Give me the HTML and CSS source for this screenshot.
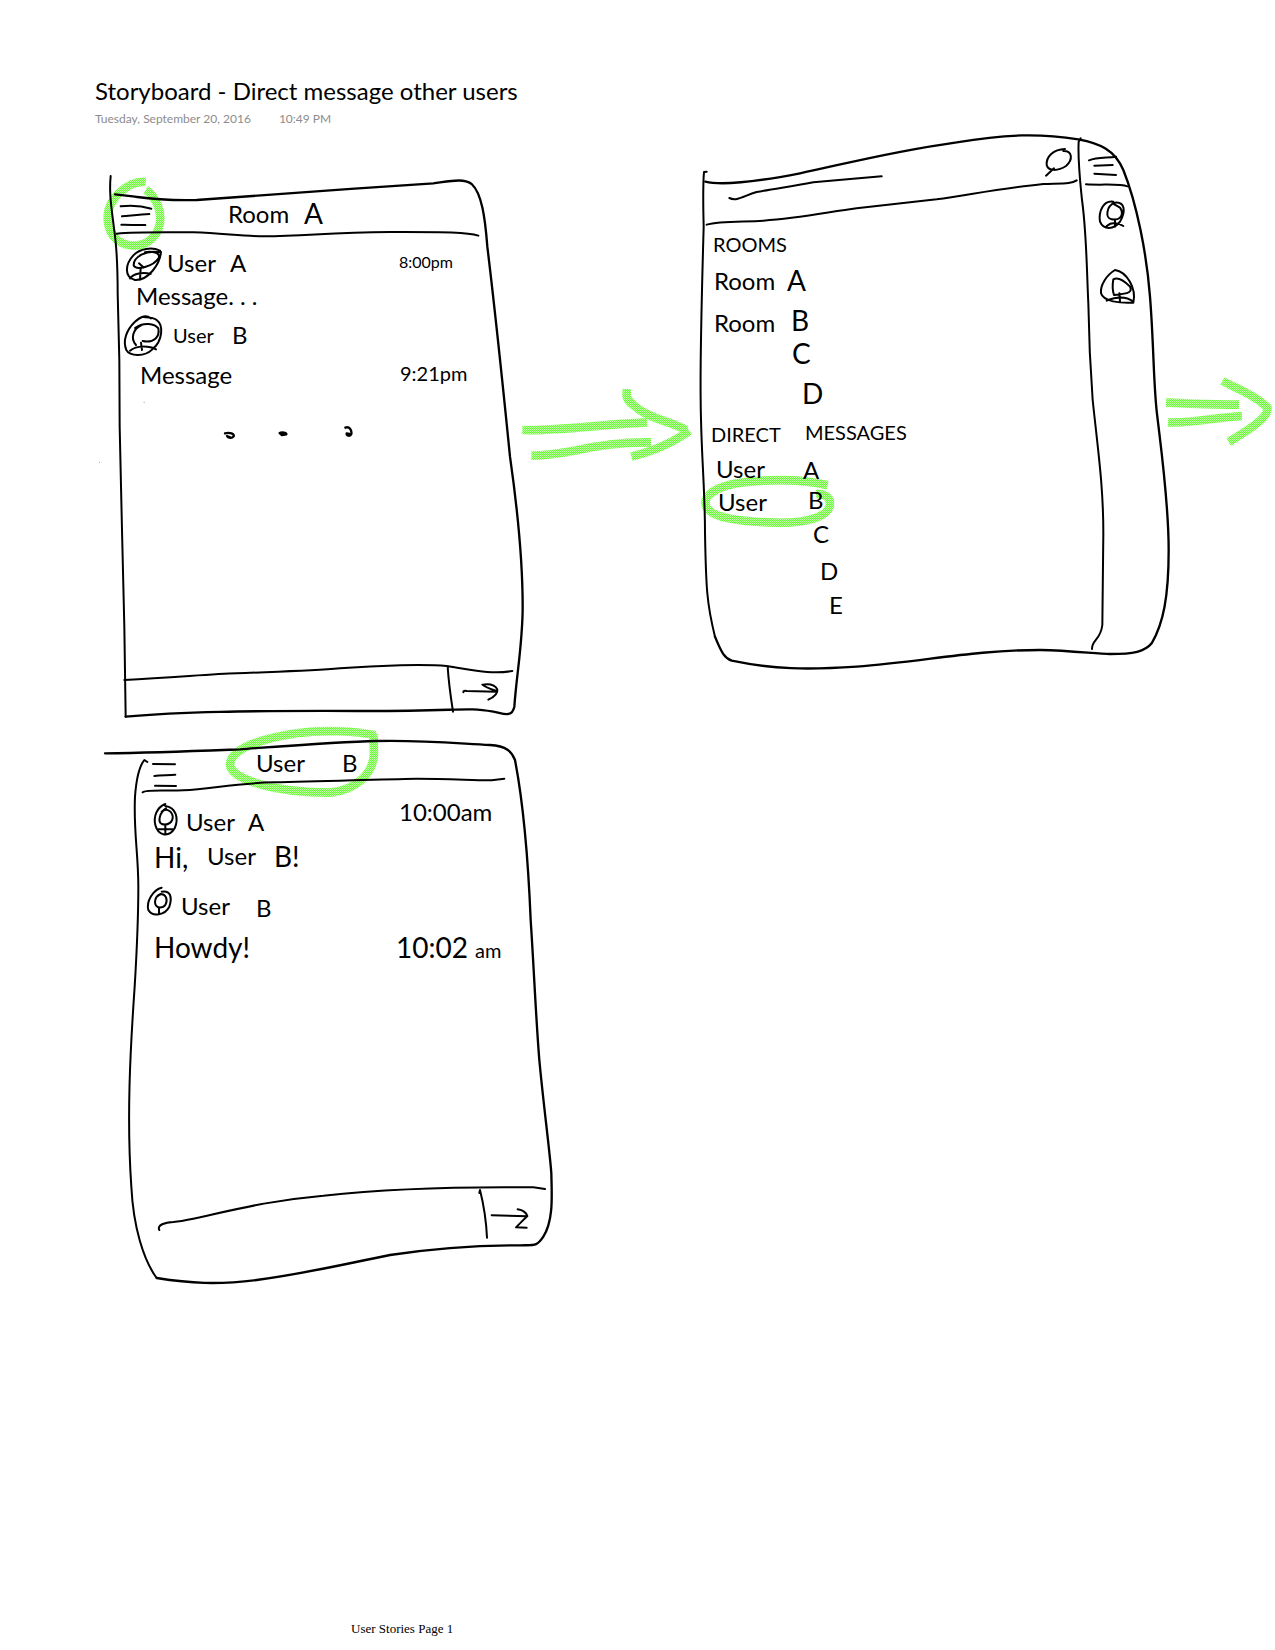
FILE: index.html
```html
<!DOCTYPE html>
<html lang="en">
<head>
<meta charset="utf-8">
<meta name="viewport" content="width=device-width, initial-scale=1">
<title>Storyboard - Direct message other users</title>
<link rel="stylesheet" href="styles.css">
</head>
<body>
<header class="note-header">
  <h1 class="note-title">Storyboard - Direct message other users</h1>
  <p class="note-meta"><time datetime="2016-09-20">Tuesday, September 20, 2016</time><time datetime="22:49">10:49 PM</time></p>
</header>
<main class="board">
  <!-- Frame 1: conversation in Room A -->
  <svg class="frame" viewBox="0 130 695 592" role="group" aria-label="Room A conversation">
    <defs>
      <pattern id="marker" width="6" height="6" patternUnits="userSpaceOnUse">
        <path class="marker-base" d="M0 0h6v6h-6z"/>
        <path class="marker-dot" d="M0 0h3v3h-3zM3 3h3v3h-3z"/>
      </pattern>
    </defs>
    <g transform="translate(80 60) scale(.33333333)">
      <path class="marker" d="M197 366C145 362 80 415 83 480C88 535 125 557 165 557C210 555 240 520 241 475C240 440 222 405 197 390"/>
      <path class="ink" d="M92 348C87 400 94 440 102 505C112 570 113 620 113 700L118 900L119 1100L126 1410L133 1700L137 1970"/>
      <path class="ink bold" d="M137 1970C300 1955 500 1952 830 1953S1150 1940 1240 1955C1270 1960 1295 1975 1303 1940C1310 1840 1328 1750 1328 1640C1328 1500 1310 1330 1290 1190C1270 990 1245 750 1222 560C1215 470 1205 400 1175 372C1150 355 1120 362 1060 370C820 385 500 410 350 420C240 422 200 415 165 410L105 403"/>
      <path class="ink" d="M110 521C170 515 260 517 340 517C430 520 480 528 550 529C680 528 740 518 930 516C1080 516 1160 515 1195 527"/>
      <path class="ink" d="M122 439C150 436 180 436 214 446M126 469C150 467 180 464 208 462M124 494C150 495 170 496 196 495"/>
      <path class="ink" d="M240 572C215 560 180 566 160 586C135 613 132 652 165 660C205 662 240 612 243 576M240 577C198 568 160 592 161 616C168 632 220 620 236 594C243 578 215 573 195 577"/>
      <path class="ink" d="M177 610L190 622M182 625L180 658M150 655C160 640 190 635 212 642"/>
      <path class="ink" d="M213 775C195 762 180 772 165 785C138 810 128 845 139 870C150 890 195 890 217 868C250 840 250 795 230 780C220 771 205 772 190 771M185 795C160 805 150 835 168 855M165 804C190 785 225 790 235 805C240 830 222 850 188 843M183 848L186 870M150 872C170 855 210 858 228 868"/>
      <path class="ink" d="M1150 1897Q1150 1891 1160 1893L1250 1895M1225 1919C1240 1912 1254 1900 1252 1888C1245 1874 1225 1871 1207 1874C1215 1882 1235 1888 1250 1893"/>
      <path class="ink" d="M133 1860C300 1851 400 1842 470 1840C620 1834 700 1832 780 1825C900 1815 1040 1812 1100 1818C1170 1828 1230 1845 1297 1833M1103 1820C1106 1870 1112 1910 1119 1955"/>
      <path class="ink bold" d="M435 1120C450 1116 464 1122 461 1129C456 1136 444 1135 441 1128L450 1132M599 1119C605 1116 620 1118 619 1123L606 1125ZM796 1103C808 1098 816 1110 814 1122C811 1130 799 1128 800 1120L808 1122"/>
      <path class="speck" d="M191 1027h3M57 1207h3"/>
    </g>
    <g transform="translate(510 360) scale(.33333333)">
      <path class="marker" d="M37 210C150 213 250 195 412 187M64 287C180 287 250 245 423 247M350 87L350 110C353 122 362 130 385 147C420 175 480 185 529 210M538 212C500 240 440 270 364 290"/>
    </g>
    <text class="hand md" x="228" y="223">Room</text>
    <text class="hand lg" x="304" y="224">A</text>
    <text class="hand md" x="167" y="272">User</text>
    <text class="hand md" x="230" y="272">A</text>
    <text class="hand xs" x="399" y="268">8:00pm</text>
    <text class="hand md" x="136" y="305">Message. . .</text>
    <text class="hand sm" x="173" y="343">User</text>
    <text class="hand md" x="232" y="344">B</text>
    <text class="hand md" x="140" y="384">Message</text>
    <text class="hand sm" x="400" y="381">9:21pm</text>
  </svg>

  <!-- Frame 2: navigation drawer with rooms and direct messages -->
  <svg class="frame" viewBox="695 130 580 592" role="group" aria-label="Rooms and direct messages drawer">
    <g transform="translate(690 120) scale(.33333333)">
      <path class="marker" d="M413 1096C330 1076 250 1078 180 1085C100 1092 47 1115 46 1150C50 1190 130 1205 260 1208C350 1210 420 1190 420 1150C420 1130 400 1120 378 1122"/>
      <path class="ink" d="M50 155L42 156C38 200 40 280 41 320C36 500 30 700 32 840C33 1000 45 1100 45 1240C48 1400 50 1450 75 1550"/>
      <path class="ink bold" d="M75 1550C95 1600 105 1615 125 1622C250 1648 350 1650 500 1640C700 1625 850 1590 1050 1590C1150 1592 1220 1602 1260 1602C1330 1602 1365 1595 1385 1570C1420 1510 1436 1430 1436 1290C1436 1150 1415 1000 1402 890C1390 800 1392 680 1380 530C1370 400 1340 250 1300 150C1275 90 1230 70 1165 58C1050 40 950 42 800 67C600 95 450 135 330 160C200 185 100 198 46 185"/>
      <path class="ink" d="M118 234C140 245 160 228 200 216C260 205 300 200 370 187L575 169"/>
      <path class="ink" d="M50 314C90 302 160 306 220 302C330 295 420 275 500 265L740 238C850 222 950 203 1060 192C1120 190 1145 192 1160 181"/>
      <path class="ink" d="M1125 87C1090 88 1068 110 1070 135C1075 155 1105 153 1128 138C1150 118 1147 92 1120 93M1092 145L1068 167"/>
      <path class="ink" d="M1172 55L1166 65C1163 120 1170 180 1176 240C1190 340 1190 450 1195 550C1197 680 1202 760 1208 840C1225 1000 1240 1100 1240 1240L1237 1515C1232 1560 1205 1560 1206 1587"/>
      <path class="ink" d="M1197 121C1220 112 1250 114 1278 110M1213 137L1268 135M1213 161L1278 165M1188 193C1240 196 1290 190 1312 199"/>
      <path class="ink" d="M1270 245C1240 240 1225 275 1230 305C1240 330 1272 330 1290 305C1308 275 1305 245 1275 248C1248 258 1245 295 1265 298C1295 302 1302 280 1290 263L1268 250M1275 298L1275 320M1250 318C1265 305 1285 308 1300 318"/>
      <path class="ink" d="M1275 450C1250 465 1230 495 1233 520C1240 545 1290 550 1330 548C1340 505 1310 455 1275 450M1272 525C1265 505 1268 490 1270 478C1285 470 1305 485 1320 500C1330 520 1305 522 1272 525M1288 520L1290 545M1250 542C1280 530 1310 530 1330 545"/>
    </g>
    <g transform="translate(1140 360) scale(.33333333)">
      <path class="marker" d="M78 127C120 130 200 133 297 134M84 187C150 192 220 172 306 168M247 63C300 90 350 110 382 142C386 165 360 190 266 246"/>
    </g>
    <text class="hand sm" x="713" y="252">ROOMS</text>
    <text class="hand md" x="714" y="290">Room</text>
    <text class="hand lg" x="787" y="291">A</text>
    <text class="hand md" x="714" y="332">Room</text>
    <text class="hand lg" x="791" y="331">B</text>
    <text class="hand lg" x="792" y="364">C</text>
    <text class="hand lg" x="802" y="404">D</text>
    <text class="hand sm" x="711" y="442">DIRECT</text>
    <text class="hand sm" x="805" y="440">MESSAGES</text>
    <text class="hand md" x="716" y="478">User</text>
    <text class="hand md" x="803" y="479">A</text>
    <text class="hand md" x="718" y="511">User</text>
    <text class="hand md" x="808" y="509">B</text>
    <text class="hand md" x="813" y="543">C</text>
    <text class="hand md" x="820" y="580">D</text>
    <text class="hand md" x="829" y="614">E</text>
  </svg>

  <!-- Frame 3: direct conversation with User B -->
  <svg class="frame" viewBox="0 722 695 570" role="group" aria-label="User B conversation">
    <g transform="translate(90 720) scale(.33333333)">
      <path class="marker" d="M856 46C800 33 700 28 620 40C520 55 420 85 420 135C425 180 560 218 720 218C800 210 850 160 852 100L850 40"/>
      <path class="ink bold" d="M45 100C200 98 320 93 450 88C600 77 750 65 860 63C1000 60 1100 70 1200 75C1250 78 1265 95 1275 120C1300 250 1315 430 1322 600C1332 750 1338 900 1348 1020C1360 1150 1380 1300 1384 1360C1385 1420 1392 1500 1360 1550C1340 1580 1335 1575 1290 1576C1150 1576 1000 1590 900 1605C750 1635 650 1660 500 1680C380 1695 300 1690 200 1674"/>
      <path class="ink" d="M200 1674C160 1620 130 1520 124 1400C110 1200 120 1000 134 800C140 700 145 580 145 500C145 400 130 330 135 230C140 160 155 130 163 120L172 126"/>
      <path class="ink" d="M158 217C165 208 220 213 280 211C360 208 430 190 550 187C700 185 850 178 980 176C1080 176 1160 182 1205 181L1243 176"/>
      <path class="ink" d="M189 132L255 133M193 168C215 164 235 167 256 164M195 197L258 198"/>
      <path class="ink" d="M226 252C200 262 190 290 196 315C205 350 238 352 254 325C267 295 258 262 226 258M228 265C208 278 203 305 215 312C235 318 250 305 248 288C243 268 225 265 215 275M226 314L226 340M205 328L248 328"/>
      <path class="ink" d="M215 503C190 508 168 545 175 570C188 592 225 585 238 560C248 530 240 510 215 515M212 522C192 530 190 555 205 562C225 565 234 548 228 532C222 520 210 520 203 528M207 563L207 582"/>
      <path class="ink" d="M208 1530C200 1515 225 1507 250 1506C280 1504 300 1498 320 1494C450 1465 550 1440 700 1427C900 1405 1150 1400 1330 1402L1365 1407M1168 1419L1170 1410C1180 1450 1189 1510 1191 1553"/>
      <path class="ink" d="M1205 1486L1312 1489M1283 1468C1300 1470 1310 1480 1312 1488C1300 1500 1290 1510 1278 1522L1310 1523"/>
    </g>
    <text class="hand md" x="256" y="772">User</text>
    <text class="hand md" x="342" y="772">B</text>
    <text class="hand md" x="186" y="831">User</text>
    <text class="hand md" x="248" y="831">A</text>
    <text class="hand md" x="399" y="821">10:00am</text>
    <text class="hand lg" x="154" y="868">Hi,</text>
    <text class="hand md" x="207" y="865">User</text>
    <text class="hand lg" x="274" y="867">B!</text>
    <text class="hand md" x="181" y="915">User</text>
    <text class="hand md" x="256" y="917">B</text>
    <text class="hand lg" x="154" y="958">Howdy!</text>
    <text class="hand lg" x="396" y="958">10:02</text>
    <text class="hand sm" x="475" y="958">am</text>
  </svg>
</main>
<footer class="page-footer">User Stories Page 1</footer>
</body>
</html>
```
FILE: styles.css
```css
* {
  box-sizing: border-box;
}

body {
  display: flex;
  flex-direction: column;
  min-height: 100vh;
  margin: 0;
  background: #fff;
  color: #000;
  font-family: Lato, "Liberation Sans", sans-serif;
}

.note-header {
  display: flex;
  flex-direction: column;
  gap: 4px;
  padding: 75px 95px 3px;
}

.note-title {
  margin: 0;
  font-size: 24px;
  font-weight: 400;
  line-height: 32px;
}

.note-meta {
  display: flex;
  gap: 28px;
  margin: 0;
  color: #8c8c8c;
  font-size: 12px;
  line-height: 16px;
}

.board {
  display: grid;
  grid-template-columns: 695fr 580fr;
}

.frame {
  display: block;
  width: 100%;
  height: auto;
  overflow: visible;
}

.ink {
  fill: none;
  stroke: #000;
  stroke-width: 6;
  stroke-linecap: round;
  stroke-linejoin: round;
}

.bold {
  stroke-width: 7;
}

.marker {
  fill: none;
  stroke: url(#marker);
  stroke-width: 26;
}

.marker-base {
  fill: #c4ffac;
}

.marker-dot {
  fill: #66ff33;
  shape-rendering: crispEdges;
}

.speck {
  stroke: #999;
  stroke-width: 3;
}

.hand {
  fill: #000;
}

.xs { font-size: 16px; }
.sm { font-size: 20px; }
.md { font-size: 24px; }
.lg { font-size: 28px; }

.page-footer {
  margin-top: auto;
  padding: 0 351px 13px;
  font-family: "Liberation Serif", serif;
  font-size: 13px;
  line-height: 16px;
}
```
